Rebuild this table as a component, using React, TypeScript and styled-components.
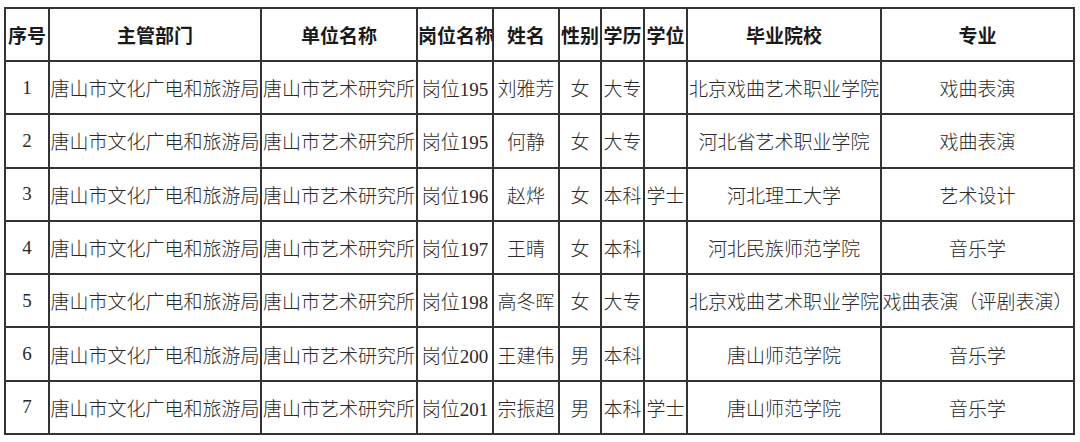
import React from 'react';
import styled, { createGlobalStyle } from 'styled-components';

const GlobalStyle = createGlobalStyle`
  html, body {
    margin: 0;
    padding: 0;
    background: #ffffff;
  }
  body {
    font-family: "Liberation Serif", "Noto Sans CJK SC", serif;
    color: #222;
  }
`;

const Page = styled.div`
  padding: 7px 0 0 4px;
  width: 1080px;
  height: 442px;
  box-sizing: border-box;
`;

const Table = styled.table`
  border-collapse: collapse;
  table-layout: fixed;
  width: 1069px;
`;

const HeadCell = styled.th`
  border: 2px solid #333;
  height: 51px;
  padding: 0;
  font-size: 19px;
  font-weight: bold;
  text-align: center;
  white-space: nowrap;
  overflow: hidden;
  color: #1a1a1a;
`;

const Cell = styled.td`
  border: 2px solid #333;
  height: 51.3px;
  padding: 0;
  font-size: 19px;
  font-weight: 300;
  text-align: center;
  white-space: nowrap;
  overflow: hidden;
  color: #2a2a2a;
`;

const widths = [44, 212, 156, 76, 66, 42, 43, 43, 194, 193];

const headers = ['序号', '主管部门', '单位名称', '岗位名称', '姓名', '性别', '学历', '学位', '毕业院校', '专业'];

const rows: string[][] = [
  ['1', '唐山市文化广电和旅游局', '唐山市艺术研究所', '岗位195', '刘雅芳', '女', '大专', '', '北京戏曲艺术职业学院', '戏曲表演'],
  ['2', '唐山市文化广电和旅游局', '唐山市艺术研究所', '岗位195', '何静', '女', '大专', '', '河北省艺术职业学院', '戏曲表演'],
  ['3', '唐山市文化广电和旅游局', '唐山市艺术研究所', '岗位196', '赵烨', '女', '本科', '学士', '河北理工大学', '艺术设计'],
  ['4', '唐山市文化广电和旅游局', '唐山市艺术研究所', '岗位197', '王晴', '女', '本科', '', '河北民族师范学院', '音乐学'],
  ['5', '唐山市文化广电和旅游局', '唐山市艺术研究所', '岗位198', '高冬晖', '女', '大专', '', '北京戏曲艺术职业学院', '戏曲表演（评剧表演）'],
  ['6', '唐山市文化广电和旅游局', '唐山市艺术研究所', '岗位200', '王建伟', '男', '本科', '', '唐山师范学院', '音乐学'],
  ['7', '唐山市文化广电和旅游局', '唐山市艺术研究所', '岗位201', '宗振超', '男', '本科', '学士', '唐山师范学院', '音乐学'],
];

export default function App() {
  return (
    <>
      <GlobalStyle />
      <Page>
        <Table>
          <colgroup>
            {widths.map((w, i) => (
              <col key={i} style={{ width: w }} />
            ))}
          </colgroup>
          <thead>
            <tr>
              {headers.map((h) => (
                <HeadCell key={h}>{h}</HeadCell>
              ))}
            </tr>
          </thead>
          <tbody>
            {rows.map((r) => (
              <tr key={r[0]}>
                {r.map((c, i) => (
                  <Cell key={i}>{c}</Cell>
                ))}
              </tr>
            ))}
          </tbody>
        </Table>
      </Page>
    </>
  );
}
